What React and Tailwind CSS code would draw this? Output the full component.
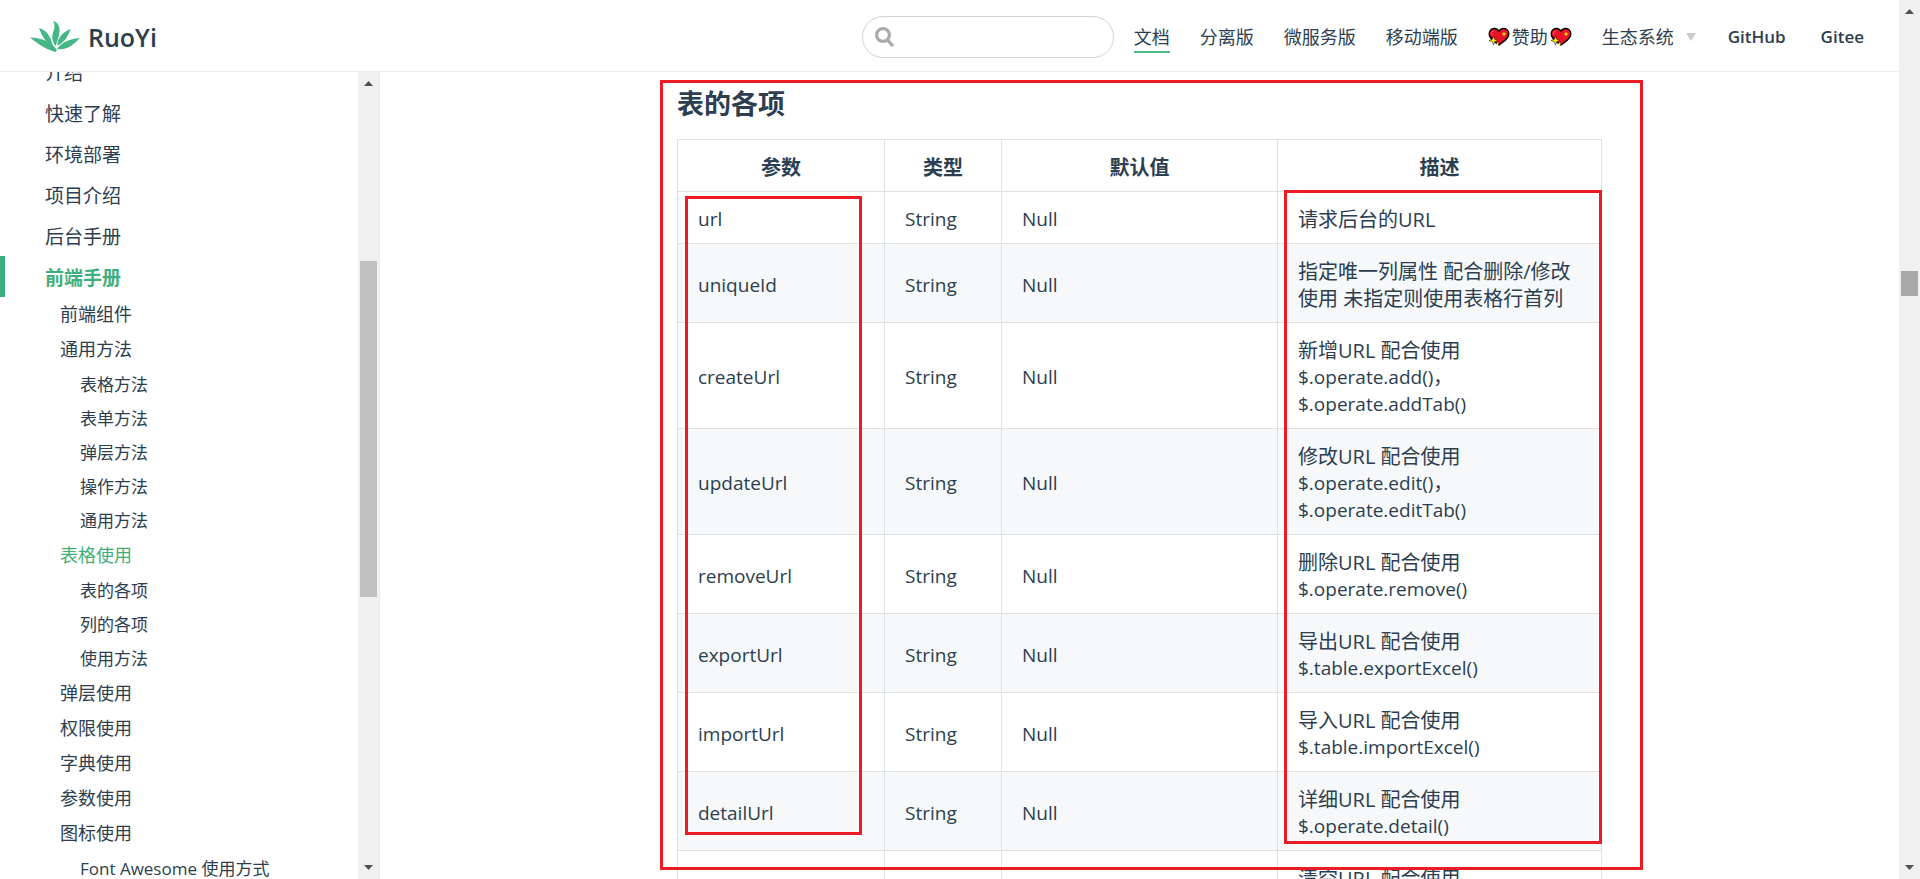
const topLinks = ["分离版", "微服务版", "移动端版"];

const menuBefore = ["介绍", "快速了解", "环境部署", "项目介绍", "后台手册"];

const submenu = [
  { label: "前端组件" },
  { label: "通用方法", children: ["表格方法", "表单方法", "弹层方法", "操作方法", "通用方法"] },
  { label: "表格使用", active: true, children: ["表的各项", "列的各项", "使用方法"] },
  { label: "弹层使用" },
  { label: "权限使用" },
  { label: "字典使用" },
  { label: "参数使用" },
  { label: "图标使用", children: ["Font Awesome 使用方式"] },
];

const rows = [
  { name: "url", desc: "请求后台的URL" },
  { name: "uniqueId", desc: "指定唯一列属性 配合删除/修改使用 未指定则使用表格行首列" },
  { name: "createUrl", desc: "新增URL 配合使用", calls: "$.operate.add()，$.operate.addTab()" },
  { name: "updateUrl", desc: "修改URL 配合使用", calls: "$.operate.edit()，$.operate.editTab()" },
  { name: "removeUrl", desc: "删除URL 配合使用", calls: "$.operate.remove()" },
  { name: "exportUrl", desc: "导出URL 配合使用", calls: "$.table.exportExcel()" },
  { name: "importUrl", desc: "导入URL 配合使用", calls: "$.table.importExcel()" },
  { name: "detailUrl", desc: "详细URL 配合使用", calls: "$.operate.detail()" },
  { name: "cleanUrl", desc: "清空URL 配合使用", calls: "$.operate.clean()" },
];

function Logo() {
  return (
    <svg viewBox="0 0 50 32" className="h-8 w-[50px]" fill="#45b787" aria-hidden="true">
      <path d="M23 0 C28 1 30 6 29.500 11 C29 16 27 21 25.500 25 C22 20 21.500 15 23.500 10 C25 6 25 3 23 0Z" />
      <path d="M9 7 C17 9 21 16 22.800 25 C15 21 12 15 9 7Z" />
      <path d="M40.500 8 C38 16 34 22 27 24.500 C28 16 33 11 40.500 8Z" />
      <path d="M0 16.500 C12 17 22 21 27 29 L25.500 31 C17 29 8 23 0 16.500Z" />
      <path d="M50 17 C43 24 37 29.500 27 28 C31 21.500 39 18 50 17Z" />
    </svg>
  );
}

function Heart() {
  return (
    <svg viewBox="0 0 22 20" className="h-5 w-[22px]" aria-hidden="true">
      <path
        d="M11 4 C13 1 16.500 .9 18.800 2.500 C21.300 4.500 21.200 8 19.500 10.500 C17.500 13.500 14.500 15.500 11 18 C7.500 15.500 4.500 13.500 2.500 10.500 C.8 8 .7 4.500 3.200 2.500 C5.500 .9 9 1 11 4Z"
        fill="#e81224"
        stroke="#000"
        strokeWidth="1.500"
      />
      <path d="M4 8 C3 6 4 4 6 3.600" fill="none" stroke="#f4606c" strokeWidth="1" />
      <path d="M16 4.500 l.7 1.800 1.800.7 -1.800.7 -.7 1.800 -.7-1.800 -1.800-.7 1.800-.7Z" fill="#fff100" />
      <path d="M5.500 9 l1.200 3.300 3.300 1.200 -3.300 1.200 -1.200 3.300 -1.200-3.300 -3.300-1.200 3.300-1.200Z" fill="#fff100" stroke="#000" strokeWidth=".5" />
      <path d="M9.500 15 l.6 1.400 1.400.6 -1.400.6 -.6 1.400 -.6-1.400 -1.400-.6 1.400-.6Z" fill="#fff100" />
    </svg>
  );
}

function Arrow({ down }) {
  return (
    <svg viewBox="0 0 9 5" className="h-[5px] w-[9px]" fill="#505050" aria-hidden="true">
      <path d={down ? "M0 0H9L4.500 5Z" : "M0 5H9L4.500 0Z"} />
    </svg>
  );
}

function Navbar() {
  return (
    <header className="flex h-[72px] shrink-0 items-center justify-between border-b border-[#eaecef] px-[30px] pt-0.5">
      <a href="#" className="flex items-center gap-2">
        <Logo />
        <span className="text-[25px] leading-9 font-semibold">RuoYi</span>
      </a>
      <div className="flex items-center gap-5">
        <label className="relative block">
          <svg
            viewBox="0 0 20 20"
            className="pointer-events-none absolute top-[11px] left-[13px] h-5 w-5"
            fill="none"
            stroke="#aaa"
            strokeWidth="3.200"
            aria-hidden="true"
          >
            <circle cx="8" cy="8" r="6.400" />
            <path d="M12.500 13 L18 19" />
          </svg>
          <input
            type="text"
            aria-label="Search"
            className="block h-[42px] w-[252px] rounded-[21px] border border-[#cfd4db] bg-transparent pr-3 pl-10 text-[18px] outline-none"
          />
        </label>
        <nav className="flex items-center gap-[30px] text-[18px] leading-7 whitespace-nowrap">
          <a href="#" className="-mb-0.5 border-b-2 border-[#46bd87] leading-7">
            文档
          </a>
          {topLinks.map((t) => (
            <a key={t} href="#">
              {t}
            </a>
          ))}
          <a href="#" className="flex items-center gap-0.5">
            <Heart />
            赞助
            <Heart />
          </a>
          <button type="button" className="flex items-center gap-3 pr-0.5">
            生态系统
            <svg viewBox="0 0 10 8" className="h-2 w-2.5" fill="#ccc" aria-hidden="true">
              <path d="M0 0H10L5 8Z" />
            </svg>
          </button>
          <a href="#" className="pr-[5px] text-[17px] font-semibold">
            GitHub
          </a>
          <a href="#" className="pr-[5px] text-[17px] font-semibold">
            Gitee
          </a>
        </nav>
      </div>
    </header>
  );
}

function Sidebar() {
  return (
    <aside className="flex w-[380px] shrink-0 overflow-hidden border-r border-[#eaecef]">
      <ul className="-mt-[21px] min-w-0 flex-1 text-[19px] leading-[37px]">
        {menuBefore.map((t) => (
          <li key={t}>
            <a href="#" className="block pt-1 pl-[45px]">
              {t}
            </a>
          </li>
        ))}
        <li>
          <a href="#" className="block border-l-[5px] border-[#3eaf7c] pt-1 pl-10 font-bold text-[#3eaf7c]">
            前端手册
          </a>
          <ul className="text-[18px] leading-[35px]">
            {submenu.map((m) => (
              <li key={m.label}>
                <a href="#" className={m.active ? "block pl-[60px] text-[#3eaf7c]" : "block pl-[60px]"}>
                  {m.label}
                </a>
                {m.children && (
                  <ul className="pt-px text-[17px] leading-[34px]">
                    {m.children.map((c) => (
                      <li key={c}>
                        <a href="#" className="block pl-20">
                          {c}
                        </a>
                      </li>
                    ))}
                  </ul>
                )}
              </li>
            ))}
          </ul>
        </li>
      </ul>
      <div className="flex w-[21px] flex-col items-center bg-[#f0f0f0] pt-[9px] pb-[9px]" aria-hidden="true">
        <Arrow />
        <div className="flex w-full flex-1 flex-col px-0.5 pt-[5px] pb-[5px]">
          <div className="h-[170px]" />
          <div className="h-[336px] bg-[#c1c1c1]" />
        </div>
        <Arrow down />
      </div>
    </aside>
  );
}

function Content() {
  const cell = "border border-[#dfe2e5] px-5 pt-[14px] pb-[10px]";
  return (
    <main className="min-w-0 flex-1 overflow-hidden">
      <div className="relative mx-auto max-w-[925px] pt-[13px]">
        <h3 className="text-[27px] leading-[37px] font-bold">表的各项</h3>
        <table className="mt-[17px] w-full table-fixed border-collapse text-[20px] leading-[27px]">
          <colgroup>
            <col className="w-[207px]" />
            <col className="w-[117px]" />
            <col className="w-[276px]" />
            <col />
          </colgroup>
          <thead>
            <tr>
              {["参数", "类型", "默认值", "描述"].map((h) => (
                <th key={h} className={`${cell} font-bold`}>
                  {h}
                </th>
              ))}
            </tr>
          </thead>
          <tbody>
            {rows.map(({ name, desc, calls }) => (
              <tr key={name} className="even:bg-[#f6f8fa]">
                <td className={`${cell} text-[19px]`}>{name}</td>
                <td className={`${cell} text-[19px]`}>String</td>
                <td className={`${cell} text-[19px]`}>Null</td>
                <td className={cell}>
                  {desc}
                  {calls && <span className="block text-[19px]">{calls}</span>}
                </td>
              </tr>
            ))}
          </tbody>
        </table>
        <div className="pointer-events-none absolute top-2 -right-[41px] -left-[17px] h-[790px] border-3 border-[#ed1c24]" />
        <div className="pointer-events-none absolute top-[124px] left-2 h-[639px] w-[177px] border-3 border-[#ed1c24]" />
        <div className="pointer-events-none absolute top-[118px] right-0 h-[654px] w-[318px] border-3 border-[#ed1c24]" />
      </div>
    </main>
  );
}

export default function App() {
  return (
    <div className="flex h-screen overflow-hidden bg-white font-['Open_Sans','Noto_Sans_CJK_SC',sans-serif] text-[#2c3e50]" lang="zh-CN">
      <div className="flex min-w-0 flex-1 flex-col">
        <Navbar />
        <div className="flex min-h-0 flex-1">
          <Sidebar />
          <Content />
        </div>
      </div>
      <div className="flex w-[21px] shrink-0 flex-col items-center bg-[#f0f0f0] pt-[9px] pb-[9px]" aria-hidden="true">
        <Arrow />
        <div className="flex w-full flex-1 flex-col px-0.5">
          <div className="h-[257px]" />
          <div className="h-[25px] bg-[#a8a8a8]" />
        </div>
        <Arrow down />
      </div>
    </div>
  );
}
